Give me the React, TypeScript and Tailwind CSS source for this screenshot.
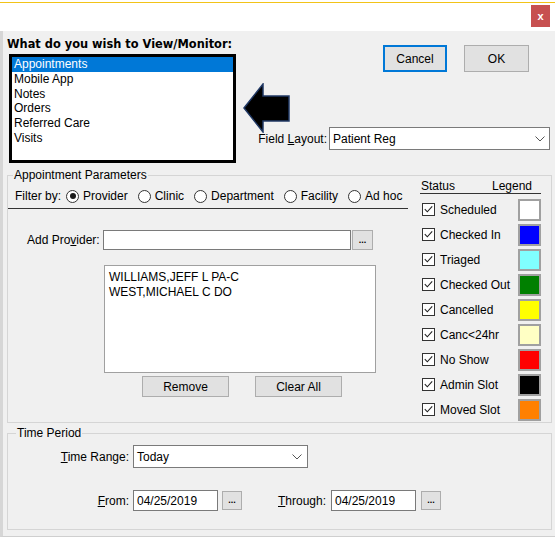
import React from "react";

const statuses: [string, string][] = [
  ["Scheduled", "bg-white"],
  ["Checked In", "bg-[#0000ff]"],
  ["Triaged", "bg-[#80ffff]"],
  ["Checked Out", "bg-[#008000]"],
  ["Cancelled", "bg-[#ffff00]"],
  ["Canc<24hr", "bg-[#ffffc4]"],
  ["No Show", "bg-[#ff0000]"],
  ["Admin Slot", "bg-black"],
  ["Moved Slot", "bg-[#ff8000]"],
];

const views = ["Appointments", "Mobile App", "Notes", "Orders", "Referred Care", "Visits"];
const filters = ["Provider", "Clinic", "Department", "Facility", "Ad hoc"];

const Chevron = () => (
  <svg width="10" height="6" viewBox="0 0 10 6">
    <path d="M0.5 0.5 L5 5 L9.5 0.5" fill="none" stroke="#555" strokeWidth="1" />
  </svg>
);

const Check = () => (
  <span className="w-[13px] h-[13px] border border-[#333] bg-white flex items-center justify-center">
    <svg width="11" height="11" viewBox="0 0 11 11">
      <path d="M1.8 5.2 L4.3 7.8 L9.2 2.3" fill="none" stroke="#222" strokeWidth="1.1" />
    </svg>
  </span>
);

const Radio = ({ on }: { on?: boolean }) => (
  <span className="w-[13px] h-[13px] rounded-full border border-[#333] bg-white flex items-center justify-center">
    {on && <span className="w-[6px] h-[6px] rounded-full bg-[#1a1a1a]" />}
  </span>
);

const Dots = () => (
  <div className="w-[20px] h-[19px] bg-[#e1e1e1] border border-[#adadad] flex items-end justify-center pb-[4px] text-[9px] leading-none font-bold">
    ...
  </div>
);

export default function App() {
  return (
    <div className="w-[557px] h-[538px] bg-white font-['Liberation_Sans',Arial,sans-serif] text-[12px] leading-[14px] text-black">
      <div className="w-[555px] h-[537px] flex flex-col">
        {/* Title bar */}
        <div className="h-[31px] bg-white flex flex-col">
          <div className="mt-[2px] h-px bg-[#f2c318]" />
          <div className="flex justify-end pr-[5px] mt-[2px]">
            <div className="w-[19px] h-[22px] bg-[#c75050] flex items-center justify-center text-white text-[11px] font-bold leading-none">
              x
            </div>
          </div>
        </div>

        {/* Body */}
        <div className="flex-1 bg-[#f0f0f0] border-l-[3px] border-[#d6d6d6] border-b border-b-[#cfcfcf]">
          {/* Top section */}
          <div className="flex">
            <div className="ml-[4px] flex flex-col">
              <div className="mt-[6px] font-['DejaVu_Sans',sans-serif] font-bold text-[11.4px] leading-[14px]">
                What do you wish to View/Monitor:
              </div>
              <div className="ml-[2px] mt-[3px] w-[227px] h-[109px] border-[3px] border-black bg-white">
                {views.map((v, i) => (
                  <div
                    key={v}
                    className={
                      i === 0
                        ? "h-[14.8px] leading-[14.8px] pl-[2px] bg-[#0078d7] text-white"
                        : "h-[14.8px] leading-[14.8px] pl-[2px]"
                    }
                  >
                    {v}
                  </div>
                ))}
              </div>
            </div>

            <div className="flex-1 flex flex-col">
              <div className="h-[96px] flex items-start">
                <svg className="ml-[7px] mt-[52px]" width="48" height="50" viewBox="0 0 48 50">
                  <polygon
                    points="1,25 20,1 20,13 46,13 46,38 20,38 20,49"
                    fill="#000"
                    stroke="#203864"
                    strokeWidth="1.5"
                  />
                </svg>
                <div className="flex-1" />
                <div className="mt-[14px] mr-[26px] flex gap-[17px]">
                  <div className="w-[64px] h-[27px] bg-[#e1e1e1] border-2 border-[#0078d7] flex items-center justify-center">
                    Cancel
                  </div>
                  <div className="w-[65px] h-[27px] bg-[#e1e1e1] border border-[#adadad] flex items-center justify-center">
                    OK
                  </div>
                </div>
              </div>
              <div className="h-[23px] mr-[5px] flex items-center justify-end">
                <span className="mr-[2px]">
                  Field <span className="underline">L</span>ayout:
                </span>
                <div className="w-[221px] h-[23px] bg-white border border-[#7a7a7a] flex items-center pl-[3px] pr-[4px]">
                  <span className="flex-1">Patient Reg</span>
                  <Chevron />
                </div>
              </div>
            </div>
          </div>

          {/* Appointment Parameters */}
          <fieldset className="mt-[7px] ml-[4px] w-[545px] border border-[#d5d5d5] min-w-0">
            <legend className="ml-[5px] px-px leading-[10px]">Appointment Parameters</legend>
            <div className="flex">
              <div className="w-[400px] flex flex-col">
                <div className="mt-[6px] h-[20px] pl-[7px] flex items-center gap-[10px]">
                  <span className="-mr-[5px]">Filter by:</span>
                  {filters.map((f, i) => (
                    <span key={f} className="flex items-center gap-[4px]">
                      <Radio on={i === 0} />
                      <span>{f}</span>
                    </span>
                  ))}
                </div>
                <div className="mt-[2px] h-px bg-[#333]" />

                <div className="mt-[21px] h-[20px] pl-[19px] flex items-center">
                  <span className="w-[76px]">
                    Add Pro<span className="underline">v</span>ider:
                  </span>
                  <div className="w-[248px] h-[20px] bg-white border border-[#7a7a7a]" />
                  <div className="ml-px">
                    <div className="w-[21px] h-[20px] bg-[#e1e1e1] border border-[#adadad] flex items-end justify-center pb-[4px] text-[9px] leading-none font-bold">
                      ...
                    </div>
                  </div>
                </div>

                <div className="mt-[15px] ml-[96px] w-[272px] h-[108px] bg-white border border-[#a0a0a0] pt-[4px] pl-[4px]">
                  <div className="leading-[14.7px]">WILLIAMS,JEFF L PA-C</div>
                  <div className="leading-[14.7px]">WEST,MICHAEL C DO</div>
                </div>

                <div className="mt-[3px] flex">
                  <div className="ml-[134px] w-[87px] h-[21px] bg-[#e1e1e1] border border-[#adadad] flex items-center justify-center">
                    Remove
                  </div>
                  <div className="ml-[26px] w-[87px] h-[21px] bg-[#e1e1e1] border border-[#adadad] flex items-center justify-center">
                    Clear All
                  </div>
                </div>
              </div>

              <div className="ml-[12px] w-[121px] flex flex-col">
                <div className="leading-[12px] pl-px pr-[9px] pb-px border-b border-[#333] flex justify-between">
                  <span>Status</span>
                  <span>Legend</span>
                </div>
                <div className="mt-[3px] flex flex-col">
                  {statuses.map(([label, color]) => (
                    <div key={label} className="h-[25px] flex items-center">
                      <span className="ml-[2px]">
                        <Check />
                      </span>
                      <span className="ml-[5px]">{label}</span>
                      <span className={`ml-auto w-[23px] h-[22px] border-2 border-[#a0a0a0] ${color}`} />
                    </div>
                  ))}
                </div>
              </div>
            </div>
          </fieldset>

          {/* Time Period */}
          <fieldset className="mt-[5px] ml-[4px] w-[545px] border border-[#d5d5d5] min-w-0 pb-[18px]">
            <legend className="ml-[8px] px-px leading-[10px]">Time Period</legend>
            <div className="mt-[7px] h-[23px] flex items-center">
              <span className="w-[121px] text-right">
                <span className="underline">T</span>ime Range:
              </span>
              <div className="ml-[4px] w-[175px] h-[23px] bg-white border border-[#7a7a7a] flex items-center pl-[3px] pr-[5px]">
                <span className="flex-1">Today</span>
                <Chevron />
              </div>
            </div>
            <div className="mt-[22px] h-[21px] flex items-center">
              <span className="w-[121px] text-right">
                <span className="underline">F</span>rom:
              </span>
              <div className="ml-[4px] w-[85px] h-[21px] bg-white border border-[#7a7a7a] flex items-center pl-[3px]">
                04/25/2019
              </div>
              <div className="ml-[4px]">
                <Dots />
              </div>
              <span className="ml-[36px] w-[48px]">
                <span className="underline">T</span>hrough:
              </span>
              <div className="ml-[5px] w-[85px] h-[21px] bg-white border border-[#7a7a7a] flex items-center pl-[3px]">
                04/25/2019
              </div>
              <div className="ml-[5px]">
                <Dots />
              </div>
            </div>
          </fieldset>
        </div>
      </div>
    </div>
  );
}
